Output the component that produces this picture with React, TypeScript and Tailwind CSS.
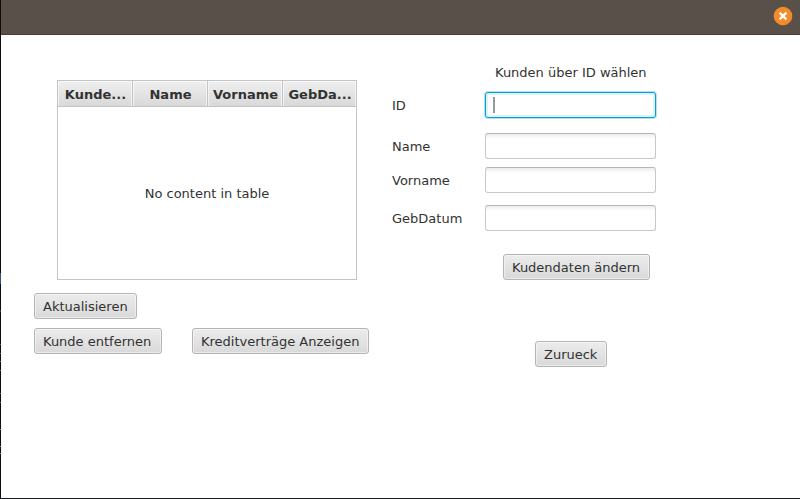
import type { ReactNode } from 'react';

const columns = ['Kunde...', 'Name', 'Vorname', 'GebDa...'];

function Button({ children, className }: { children: ReactNode; className: string }) {
  return (
    <button
      type="button"
      className={`h-[26px] shrink-0 rounded-[3px] border border-[#b5b5b5] bg-linear-to-b from-[#ececec] to-[#d9d9d9] pt-0.5 text-left leading-[22px] whitespace-nowrap shadow-[inset_0_0_0_1px_rgba(255,255,255,0.45)] pl-2 ${className}`}
    >
      {children}
    </button>
  );
}

function Field({ label, className, focused = false }: { label: string; className: string; focused?: boolean }) {
  return (
    <div className={`flex h-[26px] items-center ${className}`}>
      <span className="w-[93px] shrink-0 pt-0.5">{label}</span>
      {focused ? (
        <div className="flex h-[26px] w-[171px] items-center rounded-[3px] border border-[#039ed3] bg-white pl-[7px] shadow-[0_0_0_1px_#b4e2f3,inset_0_0_0_2px_#e0f2f9]">
          <span className="h-4 w-0.5 bg-[#999999]" />
        </div>
      ) : (
        <div className="h-[26px] w-[171px] rounded-[3px] border border-[#c8c8c8] border-t-[#b5b5b5] bg-linear-to-b from-[#ededed] to-white to-[5px]" />
      )}
    </div>
  );
}

export default function App() {
  return (
    <div className="flex h-[499px] w-[800px] overflow-hidden border-b border-[#17191c] bg-white font-['DejaVu_Sans',sans-serif] text-[13px] text-[#323232]">
      {/* Sliver of the desktop showing beside the window */}
      <div className="flex w-px shrink-0 flex-col bg-[#0c0d10]">
        <span className="mt-[273px] h-[11px] bg-[#34507f]" />
        <span className="mt-[26px] h-0.5 bg-[#2c4a63]" />
        <span className="mt-8 h-px bg-[#3d7180]" />
        <span className="mt-2 h-px bg-[#3d7180]" />
        <span className="mt-[7px] h-px bg-[#6a7590]" />
        <span className="mt-2 h-px bg-[#6a7590]" />
        <span className="mt-[22px] h-px bg-[#5c6f9c]" />
        <span className="mt-2 h-px bg-[#5c6f9c]" />
        <span className="mt-[26px] h-px bg-[#8a8f95]" />
        <span className="mt-4 h-px bg-[#8a8f95]" />
        <span className="mt-1.5 h-px bg-[#8a8f95]" />
      </div>
      <div className="flex min-w-0 flex-1 flex-col">
        <header className="flex h-[35px] shrink-0 items-start justify-end border-b border-[#443d39] bg-[#59504a] pt-1.5 pr-[7px]">
          <svg width="20" height="20" viewBox="0 0 20 20" aria-label="Close">
            <circle cx="10" cy="10" r="9.3" fill="#f48b29" />
            <path d="M6.6 6.6 13.4 13.4M13.4 6.6 6.6 13.4" stroke="#fff" strokeWidth="2.2" />
          </svg>
        </header>
        <main className="flex flex-1 items-start">
          <section className="w-[391px] shrink-0 pt-[45px] pl-[33px]">
            <div className="ml-[23px] h-[200px] w-[300px] border border-[#c4c4c4] bg-white">
              <div className="grid h-[26px] grid-cols-[75px_75px_75px_1fr] border-b border-[#c4c4c4] font-bold">
                {columns.map((name) => (
                  <div
                    key={name}
                    className="flex items-center justify-center border-r border-[#c4c4c4] bg-linear-to-b from-[#efefef] to-[#d9d9d9] pt-0.5 pl-px whitespace-nowrap shadow-[inset_1px_1px_0_rgba(255,255,255,0.6),inset_-1px_0_0_rgba(255,255,255,0.6)] last:border-r-0"
                  >
                    {name}
                  </div>
                ))}
              </div>
              <div className="flex h-[172px] items-center justify-center pt-0.5">No content in table</div>
            </div>
            <Button className="mt-[13px] w-[103px]">Aktualisieren</Button>
            <div className="mt-[9px] flex gap-[30px]">
              <Button className="w-[128px]">Kunde entfernen</Button>
              <Button className="w-[177px]">Kreditverträge Anzeigen</Button>
            </div>
          </section>
          <section className="flex w-[264px] flex-col">
            <h1 className="mt-[30px] ml-[103px] h-4 leading-4 whitespace-nowrap">Kunden über ID wählen</h1>
            <Field label="ID" className="mt-[11px]" focused />
            <Field label="Name" className="mt-[15px]" />
            <Field label="Vorname" className="mt-2" />
            <Field label="GebDatum" className="mt-3" />
            <Button className="mt-[23px] ml-[111px] w-[147px]">Kudendaten ändern</Button>
            <Button className="mt-[61px] ml-[143px] w-[72px]">Zurueck</Button>
          </section>
        </main>
      </div>
    </div>
  );
}
